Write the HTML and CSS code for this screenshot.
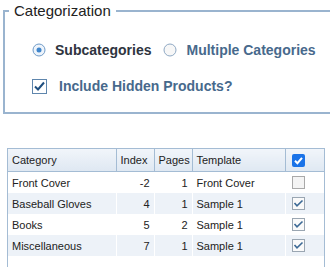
FILE: index.html
```html
<!DOCTYPE html>
<html>
<head>
<meta charset="utf-8">
<link rel="stylesheet" href="styles.css">
</head>
<body>
<fieldset class="group">
  <legend class="group-title">Categorization</legend>
  <div class="opts">
    <label class="opt opt-selected">
      <svg class="radio" width="14" height="14" viewBox="0 0 14 14"><circle cx="7" cy="7" r="6" fill="#eef4fb" stroke="#6f9bc8" stroke-width="1"/><circle cx="7" cy="7" r="2.5" fill="#3f86cc"/></svg>
      <span>Subcategories</span>
    </label>
    <label class="opt">
      <svg class="radio" width="14" height="14" viewBox="0 0 14 14"><circle cx="7" cy="7" r="6" fill="#f7f7f7" stroke="#8fa9c4" stroke-width="1"/></svg>
      <span>Multiple Categories</span>
    </label>
  </div>
  <label class="chk">
    <svg class="cbox" width="15" height="15" viewBox="0 0 15 15"><rect x="0.5" y="0.5" width="14" height="14" fill="#fff" stroke="#5f86ad"/><path d="M3 7.5 L6 10.5 L12 3.5" fill="none" stroke="#1f4f80" stroke-width="2"/></svg>
    <span>Include Hidden Products?</span>
  </label>
</fieldset>

<div class="grid">
  <table class="cats">
    <colgroup>
      <col class="c-cat"><col class="c-idx"><col class="c-pg"><col class="c-tpl"><col class="c-chk">
    </colgroup>
    <thead>
      <tr>
        <th>Category</th><th>Index</th><th>Pages</th><th>Template</th>
        <th class="ck"><svg class="hbox" width="13" height="13" viewBox="0 0 13 13"><rect x="0" y="0" width="13" height="13" rx="2" fill="#1a73e8"/><path d="M3 6.8 L5.4 9.2 L10 3.8" fill="none" stroke="#fff" stroke-width="2"/></svg></th>
      </tr>
    </thead>
    <tbody>
      <tr><td>Front Cover</td><td class="num">-2</td><td class="num">1</td><td>Front Cover</td><td class="ck"><svg class="bbox" width="13" height="13" viewBox="0 0 13 13"><rect x="0.5" y="0.5" width="12" height="12" fill="#f4f4f4" stroke="#a9a9a9"/></svg></td></tr>
      <tr><td>Baseball Gloves</td><td class="num">4</td><td class="num">1</td><td>Sample 1</td><td class="ck"><svg class="bbox" width="13" height="13" viewBox="0 0 13 13"><rect x="0.5" y="0.5" width="12" height="12" fill="#fafafa" stroke="#9aa6b2"/><path d="M2.5 6 L5 8.8 L10.5 3.5" fill="none" stroke="#3d6a96" stroke-width="1.6"/></svg></td></tr>
      <tr><td>Books</td><td class="num">5</td><td class="num">2</td><td>Sample 1</td><td class="ck"><svg class="bbox" width="13" height="13" viewBox="0 0 13 13"><rect x="0.5" y="0.5" width="12" height="12" fill="#fafafa" stroke="#9aa6b2"/><path d="M2.5 6 L5 8.8 L10.5 3.5" fill="none" stroke="#3d6a96" stroke-width="1.6"/></svg></td></tr>
      <tr><td>Miscellaneous</td><td class="num">7</td><td class="num">1</td><td>Sample 1</td><td class="ck"><svg class="bbox" width="13" height="13" viewBox="0 0 13 13"><rect x="0.5" y="0.5" width="12" height="12" fill="#fafafa" stroke="#9aa6b2"/><path d="M2.5 6 L5 8.8 L10.5 3.5" fill="none" stroke="#3d6a96" stroke-width="1.6"/></svg></td></tr>
    </tbody>
  </table>
</div>
</body>
</html>
```

FILE: styles.css
```css
html, body {
  margin: 0;
  padding: 0;
  background: #fff;
  font-family: "Liberation Sans", Arial, sans-serif;
  overflow: hidden;
}

.group {
  margin: 2px 0 0 3px;
  width: 360px;
  border: 2px solid #9ab4cf;
  padding: 20px 0 16px 4px;
  box-sizing: content-box;
}

.group-title {
  font-size: 15px;
  line-height: 18px;
  color: #222;
  padding: 0 5px;
  margin-left: 0;
}

.opts {
  display: flex;
  align-items: center;
  height: 20px;
  gap: 12px;
  margin-left: 23px;
}

.opt {
  display: flex;
  align-items: center;
  gap: 9px;
  font-size: 14px;
  font-weight: bold;
  color: #47698c;
}

.opt-selected {
  color: #2e3440;
}

.radio {
  display: block;
  flex: none;
}

.chk {
  display: flex;
  align-items: center;
  height: 20px;
  margin: 16px 0 0 23px;
  gap: 12px;
  font-size: 14px;
  font-weight: bold;
  color: #47698c;
}

.cbox {
  display: block;
  flex: none;
}

.grid {
  margin: 34px 0 0 7px;
  width: 316px;
  height: 140px;
  border: 1px solid #a4bcd4;
  border-bottom: none;
}

.cats {
  border-collapse: collapse;
  table-layout: fixed;
  width: 316px;
  font-size: 11px;
  color: #222;
}

.c-cat { width: 108px; }
.c-idx { width: 38px; }
.c-pg { width: 38px; }
.c-tpl { width: 93px; }
.c-chk { width: 39px; }

.cats th {
  height: 22px;
  padding: 0 4px;
  text-align: left;
  font-weight: normal;
  background: linear-gradient(#f1f5fa, #dfe8f2);
  border-right: 1px solid #a4bcd4;
  border-bottom: 1px solid #a4bcd4;
  white-space: nowrap;
  overflow: hidden;
}

.cats th:last-child { border-right: none; }

.cats td {
  height: 21px;
  padding: 0 4px;
  border-right: 1px solid #fff;
  white-space: nowrap;
}

.cats td:last-child { border-right: none; }

.cats tbody tr:nth-child(even) td {
  background: #edf2f8;
}

.cats .num { text-align: right; }

.cats .ck {
  text-align: left;
  padding-left: 6px;
}

.hbox, .bbox {
  display: block;
}
```
